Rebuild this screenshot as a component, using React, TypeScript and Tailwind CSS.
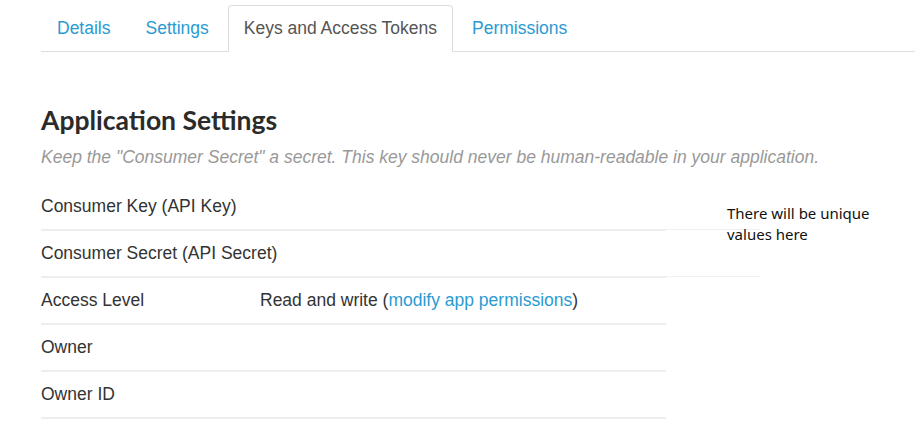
import React from 'react';

const tabs = ['Details', 'Settings', 'Keys and Access Tokens', 'Permissions'];

const rows = [
  { label: 'Consumer Key (API Key)', value: null, wide: true },
  { label: 'Consumer Secret (API Secret)', value: null, wide: true },
  { label: 'Access Level', value: 'access', wide: false },
  { label: 'Owner', value: null, wide: false },
  { label: 'Owner ID', value: null, wide: false },
];

const App = () => {
  const active = 2;

  return (
    <div className="min-h-[437px] bg-white pl-[41px] pt-[5px] font-['Liberation_Sans',Arial,sans-serif] text-[#333]">
      {/* Tabs */}
      <ul className="flex border-b border-[#ddd]">
        {tabs.map((tab, i) => (
          <li key={tab} className="-mb-px mr-[3px]">
            <a
              className={
                i === active
                  ? 'block cursor-default rounded-t-[4px] border border-[#ddd] border-b-white bg-white px-[15px] py-[10px] text-[17.5px] leading-[25px] text-[#555]'
                  : 'block rounded-t-[4px] border border-transparent px-[15px] py-[10px] text-[17.5px] leading-[25px] text-[#2a9bd2]'
              }
            >
              {tab}
            </a>
          </li>
        ))}
      </ul>

      {/* Section header */}
      <h1 className="mt-[53px] font-['Lato',sans-serif] text-[26.5px] font-bold leading-[30px] text-[#2b2b2b]">
        Application Settings
      </h1>
      <p className="mt-[10px] text-[17.5px] italic leading-[24px] text-[#999]">
        Keep the "Consumer Secret" a secret. This key should never be human-readable in your application.
      </p>

      {/* Settings rows */}
      <div className="relative mt-[15px]">
        {rows.map((row) => (
          <div key={row.label} className="flex">
            <div className="flex h-[47px] w-[625px] border-b-2 border-[#eee] text-[17.5px] leading-[45px]">
              <div className="w-[219px] shrink-0 whitespace-nowrap">{row.label}</div>
              {row.value === 'access' && (
                <div className="whitespace-nowrap">
                  Read and write (<a className="text-[#2a9bd2]">modify app permissions</a>)
                </div>
              )}
            </div>
            {row.wide && <div className="h-[46px] w-[95px] border-b border-[#f0f0f0]" />}
          </div>
        ))}

        {/* Annotation */}
        <div className="absolute left-[686px] top-[19px] w-[160px] font-['Noto_Sans',sans-serif] text-[15px] leading-[21px] text-[#111]">
          There will be unique values here
        </div>
      </div>
    </div>
  );
};

export default App;
